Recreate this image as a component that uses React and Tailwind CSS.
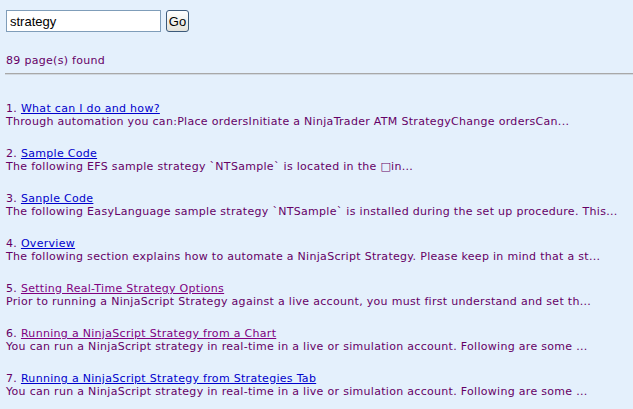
import React from "react";

const results = [
  {
    title: "What can I do and how?",
    visited: false,
    text: "Through automation you can:Place ordersInitiate a NinjaTrader ATM StrategyChange ordersCan...",
  },
  {
    title: "Sample Code",
    visited: false,
    text: "The following EFS sample strategy `NTSample` is located in the \u25A1in...",
  },
  {
    title: "Sanple Code",
    visited: false,
    text: "The following EasyLanguage sample strategy `NTSample` is installed during the set up procedure. This...",
  },
  {
    title: "Overview",
    visited: false,
    text: "The following section explains how to automate a NinjaScript Strategy. Please keep in mind that a st...",
  },
  {
    title: "Setting Real-Time Strategy Options",
    visited: true,
    text: "Prior to running a NinjaScript Strategy against a live account, you must first understand and set th...",
  },
  {
    title: "Running a NinjaScript Strategy from a Chart",
    visited: true,
    text: "You can run a NinjaScript strategy in real-time in a live or simulation account. Following are some ...",
  },
  {
    title: "Running a NinjaScript Strategy from Strategies Tab",
    visited: false,
    text: "You can run a NinjaScript strategy in real-time in a live or simulation account. Following are some ...",
  },
];

export default function App() {
  return (
    <div className="w-[633px] h-[409px] overflow-hidden bg-[#e4f0fc] text-[#660066] text-[11px] leading-[13px] tracking-[0.3px] font-['DejaVu_Sans','Liberation_Sans',sans-serif]">
      <div className="flex items-center gap-[5px] pl-[6px] pt-[10px] tracking-normal">
        <div className="w-[155px] h-[22px] border border-[#7f9db9] bg-white flex items-center px-[3px] font-['Liberation_Sans',sans-serif] text-[13px] text-black">
          strategy
        </div>
        <button className="w-[23px] h-[22px] rounded-[3px] border border-[#3c5a7a] bg-gradient-to-b from-[#ffffff] to-[#e3e3dc] font-['Liberation_Sans',sans-serif] text-[13px] text-black flex items-center justify-center">
          Go
        </button>
      </div>
      <div className="pl-[6px] mt-[22px]">89 page(s) found</div>
      <div className="ml-[5px] mt-[6px] border-t border-b border-t-[#a8a8a8] border-b-[#d0d8e0]" />
      <div className="pl-[6px] mt-[27px] flex flex-col gap-[19px]">
        {results.map((r, i) => (
          <div key={i} className="flex flex-col">
            <div>
              {i + 1}.{" "}
              <a
                href="#"
                className={
                  "underline " + (r.visited ? "text-[#800080]" : "text-[#0000cc]")
                }
              >
                {r.title}
              </a>
            </div>
            <div className="whitespace-nowrap">{r.text}</div>
          </div>
        ))}
      </div>
    </div>
  );
}
